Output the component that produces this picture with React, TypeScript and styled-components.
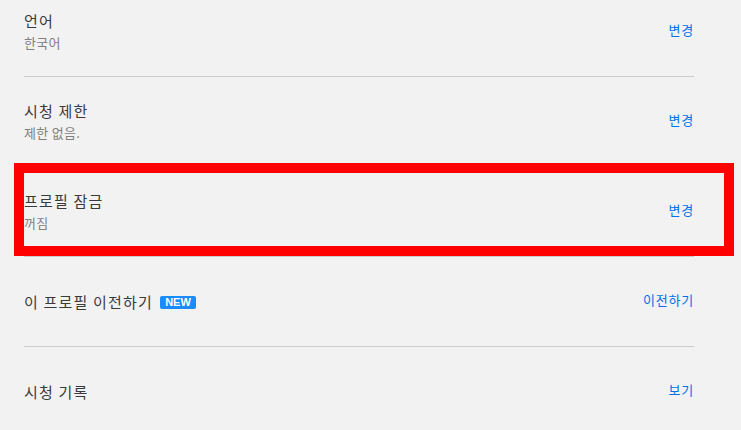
import React from "react";
import styled, { createGlobalStyle } from "styled-components";

const GlobalStyle = createGlobalStyle`
  html, body {
    margin: 0;
    padding: 0;
    background: #f2f2f2;
    overflow: hidden;
  }
  body {
    font-family: "Noto Sans CJK KR", "Liberation Sans", sans-serif;
  }
`;

const Page = styled.div`
  width: 741px;
  height: 430px;
  overflow: hidden;
  background: #f2f2f2;
`;

// list is scrolled a little, the first row is cut at the top
const List = styled.div`
  margin-top: -13px;
  padding-left: 24px;
  width: 670px;
`;

const Row = styled.div`
  position: relative;
  height: 89px;
  border-bottom: 1px solid #cccccc;
  display: flex;
  align-items: center;
  justify-content: space-between;
`;

const Highlight = styled.div`
  position: absolute;
  top: -4px;
  left: -10px;
  right: -40px;
  bottom: 0;
  border: 10px solid #ff0000;
  pointer-events: none;
`;

const Info = styled.div`
  display: flex;
  flex-direction: column;
`;

const TitleLine = styled.div`
  display: flex;
  align-items: center;
  gap: 7px;
`;

const Title = styled.span`
  font-size: 15px;
  line-height: 22px;
  letter-spacing: 1.2px;
  color: #3a3a3a;
`;

const Sub = styled.span`
  font-size: 13px;
  line-height: 22px;
  letter-spacing: 0.3px;
  color: #808080;
`;

const NewBadge = styled.span`
  font-family: "Liberation Sans", Arial, sans-serif;
  font-weight: 700;
  font-size: 11px;
  line-height: 13px;
  color: #ffffff;
  background: #1a8cff;
  border-radius: 2px;
  padding: 0 5px;
  margin-top: 1px;
`;

const Action = styled.a`
  font-size: 13px;
  line-height: 20px;
  letter-spacing: 0.8px;
  color: #0071eb;
  text-decoration: none;
  cursor: pointer;
  margin-bottom: 4px;
`;

type Item = {
  title: string;
  sub?: string;
  action: string;
  isNew?: boolean;
  highlight?: boolean;
};

const items: Item[] = [
  { title: "언어", sub: "한국어", action: "변경" },
  { title: "시청 제한", sub: "제한 없음.", action: "변경" },
  { title: "프로필 잠금", sub: "꺼짐", action: "변경", highlight: true },
  { title: "이 프로필 이전하기", action: "이전하기", isNew: true },
  { title: "시청 기록", action: "보기" },
];

const App = () => {
  return (
    <Page>
      <GlobalStyle />
      <List>
        {items.map((item) => (
          <Row key={item.title}>
            <Info>
              <TitleLine>
                <Title>{item.title}</Title>
                {item.isNew && <NewBadge>NEW</NewBadge>}
              </TitleLine>
              {item.sub && <Sub>{item.sub}</Sub>}
            </Info>
            <Action>{item.action}</Action>
            {item.highlight && <Highlight />}
          </Row>
        ))}
      </List>
    </Page>
  );
};

export default App;
